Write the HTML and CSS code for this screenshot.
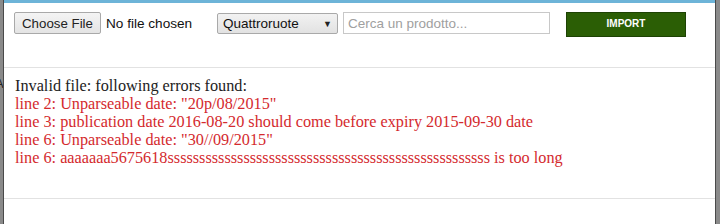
FILE: index.html
```html
<!DOCTYPE html>
<html>
<head>
<meta charset="utf-8">
<link rel="stylesheet" href="styles.css">
</head>
<body>
<div class="page">
  <div class="side side-left"><span class="bg-letter">A</span></div>
  <div class="modal">
    <div class="topbar"></div>
    <div class="header">
      <div class="file">
        <button class="file-btn">Choose File</button>
        <span class="file-name">No file chosen</span>
      </div>
      <div class="select">
        <span class="select-text">Quattroruote</span>
        <span class="select-arrow">&#9660;</span>
      </div>
      <input class="search" type="text" placeholder="Cerca un prodotto...">
      <button class="import">IMPORT</button>
    </div>
    <div class="body">
      <div class="msg">Invalid file: following errors found:</div>
      <div class="err">line 2: Unparseable date: "20p/08/2015"</div>
      <div class="err">line 3: publication date 2016-08-20 should come before expiry 2015-09-30 date</div>
      <div class="err">line 6: Unparseable date: "30//09/2015"</div>
      <div class="err">line 6: aaaaaaa5675618sssssssssssssssssssssssssssssssssssssssssssssssssss is too long</div>
    </div>
    <div class="footer"></div>
  </div>
  <div class="side side-right"></div>
</div>
</body>
</html>
```
FILE: styles.css
```css
html, body {
  margin: 0;
  padding: 0;
  background: #ffffff;
}
.page {
  display: flex;
  width: 720px;
  height: 224px;
  overflow: hidden;
}
.side {
  background: #8a8a8a;
  position: relative;
  overflow: hidden;
}
.side-left {
  width: 3px;
  border-right: 1px solid #4a4a4a;
}
.side-right {
  width: 4px;
  border-left: 1px solid #4a4a4a;
}
.bg-letter {
  position: absolute;
  left: -5px;
  top: 76px;
  font-family: "Liberation Sans", sans-serif;
  font-size: 13px;
  color: #222;
}
.modal {
  flex: 1;
  display: flex;
  flex-direction: column;
  background: #fff;
}
.topbar {
  height: 3px;
  background: #6db4d8;
}
.header {
  display: flex;
  align-items: flex-start;
  padding: 9px 0 0 10px;
  height: 55px;
  border-bottom: 1px solid #e2e2e2;
  font-family: "Liberation Sans", Arial, sans-serif;
  font-size: 13px;
}
.file {
  display: flex;
  align-items: center;
  height: 22px;
  width: 178px;
  flex-shrink: 0;
  white-space: nowrap;
}
.file-btn {
  box-sizing: border-box;
  flex-shrink: 0;
  width: 87px;
  height: 22px;
  margin: 0;
  padding: 0;
  border: 1px solid #a9a9a9;
  border-radius: 2px;
  background: linear-gradient(#f4f4f4, #e4e4e4);
  font-family: "Liberation Sans", Arial, sans-serif;
  font-size: 13.3px;
  color: #222;
}
.file-name {
  margin-left: 5px;
  font-size: 13.6px;
  color: #111;
  white-space: nowrap;
}
.select {
  box-sizing: border-box;
  flex-shrink: 0;
  margin-left: 25px;
  margin-top: 1px;
  width: 121px;
  height: 21px;
  display: flex;
  align-items: center;
  justify-content: space-between;
  padding: 0 5px 0 5px;
  border: 1px solid #a9a9a9;
  border-radius: 2px;
  background: linear-gradient(#f2f2f2, #e2e2e2);
  color: #111;
  font-size: 13.5px;
}
.select-arrow {
  font-size: 9px;
  color: #222;
}
.search {
  box-sizing: border-box;
  flex-shrink: 0;
  margin: 0 0 0 5px;
  width: 207px;
  height: 22px;
  padding: 0 4px;
  border: 1px solid #c8c8c8;
  font-family: "Liberation Sans", Arial, sans-serif;
  font-size: 13.5px;
  outline: none;
}
.search::placeholder {
  color: #a0a0a0;
}
.import {
  box-sizing: border-box;
  flex-shrink: 0;
  margin: 0 0 0 16px;
  width: 120px;
  height: 25px;
  padding: 0 0 2px 0;
  border: 1px solid #1d4204;
  background: #2b5e05;
  color: #fff;
  font-family: "Liberation Sans", Arial, sans-serif;
  font-weight: bold;
  font-size: 10px;
}
.body {
  height: 131px;
  box-sizing: border-box;
  padding: 9px 0 0 11px;
  border-bottom: 1px solid #e2e2e2;
  font-family: "Liberation Serif", "Times New Roman", serif;
  font-size: 16.25px;
  line-height: 18px;
}
.msg {
  color: #222;
}
.err {
  color: #d42a2e;
  white-space: nowrap;
}
.footer {
  flex: 1;
}
```
